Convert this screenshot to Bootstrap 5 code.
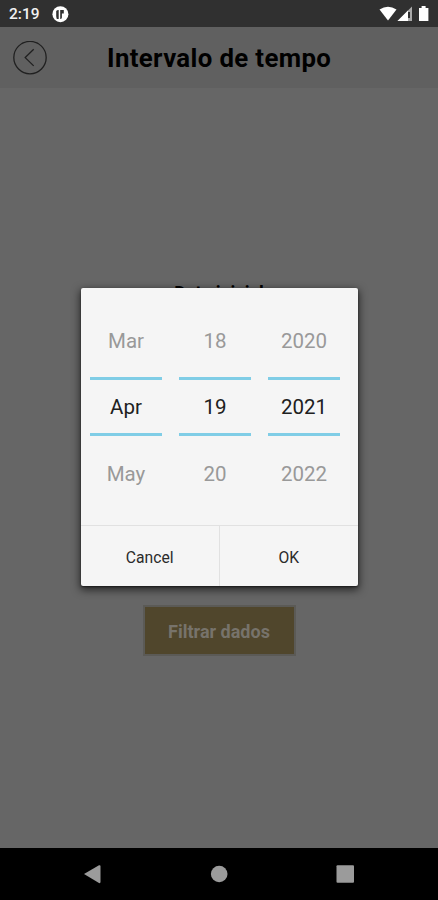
<!DOCTYPE html>
<html lang="pt">
<head>
<meta charset="utf-8">
<meta name="viewport" content="width=device-width, initial-scale=1">
<title>Intervalo de tempo</title>
<link href="https://cdn.jsdelivr.net/npm/bootstrap@5.3.0/dist/css/bootstrap.min.css" rel="stylesheet">
<style>
body{font-family:Roboto,sans-serif;height:900px;background:#666;color:#000;overflow:hidden}
.status{height:27px;background:#303030;color:#f2f2f2;font-size:15.5px;font-weight:500;line-height:27px;padding:1px 7px 0 9px;gap:12px}
.topbar{height:61px;background:#606060;padding-left:13px}
.topbar h1{font-size:25.8px;font-weight:700;letter-spacing:.36px;margin:1px 0 0 60px;white-space:nowrap}
.start-label{font-size:18px;font-weight:700;line-height:20px;padding-top:195px}
.filter-btn{width:153px;height:51px;margin-top:302px;border:2px solid #5b5a56;border-radius:0;background:#50462c;color:#77736b;font-size:18px;font-weight:700;padding:2px 0 0}
.navkeys{height:52px;background:#000}
.picker{left:81px;top:288px;width:277px;height:298px;padding-top:1px;border-radius:2px;background:#f5f5f5;box-shadow:0 3px 8px 1px rgba(0,0,0,.62),0 1px 2px rgba(0,0,0,.5)}
.wheels{height:236px;padding:19px 18px 0 9px;gap:17px}
.wheel{width:72px;font-size:20.5px;color:#999;text-align:center}
.wheel span{display:block;height:67px;line-height:66px}
.wheel .chosen{height:59px;line-height:55px;margin:2px 0 5px;color:#202020;border:solid #80cde6;border-width:3px 0}
.actions{height:61px;border-top:1px solid #e1e1e1}
.actions .btn{width:50%;border:0;border-radius:0;color:#2b2b2b;font-size:15.7px;padding:3px 0 0}
.actions .btn:first-child{border-right:1px solid #e1e1e1}
</style>
</head>
<body class="d-flex flex-column position-relative">
<div class="status d-flex align-items-center flex-shrink-0">
  <span>2:19</span>
  <svg width="17" height="17" viewBox="0 0 17 17"><circle cx="8.4" cy="8.2" r="8" fill="#fff"/><path d="M4.2 5Q5 3.8 6.7 3.9V13H4.8Q4.2 11 4.2 10ZM8.2 3.9H11.8V7.4H9.9V11.5Q9.8 13 8.2 13Z" fill="#303030"/></svg>
  <svg class="ms-auto" width="52" height="18" viewBox="0 0 52 18"><path d="M.5 4.6Q9 -1.3 17.5 4.6L9 15.5Z" fill="#fff"/><path d="M18.5 16L33 1.5V16Z" fill="#aaa"/><path d="M18.5 16L29 5.5V16Z" fill="#fff"/><path d="M29 7h2v6h-2z" fill="#303030"/><path d="M40 3h2.6V1h4V3h2.8V16H40Z" fill="#fff"/></svg>
</div>
<header class="topbar d-flex align-items-center flex-shrink-0">
  <svg width="34" height="34" viewBox="0 0 34 34" fill="none" stroke="#202020" stroke-width="1.3"><circle cx="17" cy="16.6" r="16.2"/><path d="M20.7 8.3L12.2 16.6L20.7 24.9"/></svg>
  <h1>Intervalo de tempo</h1>
</header>
<main class="flex-grow-1 d-flex flex-column align-items-center">
  <div class="start-label">Data inicial</div>
  <button class="btn filter-btn" type="button">Filtrar dados</button>
</main>
<nav class="navkeys flex-shrink-0">
  <svg width="438" height="52" viewBox="0 0 438 52" fill="#9b9b9b"><path d="M84 26L99 17.3Q100.5 17 100.5 18V34Q100.5 35.5 99 35Z"/><circle cx="219.2" cy="26" r="8.3"/><rect x="336.5" y="17.3" width="17.5" height="17.5" rx="1"/></svg>
</nav>
<section class="picker position-absolute" role="dialog">
  <div class="wheels d-flex">
    <div class="wheel"><span>Mar</span><span class="chosen">Apr</span><span>May</span></div>
    <div class="wheel"><span>18</span><span class="chosen">19</span><span>20</span></div>
    <div class="wheel"><span>2020</span><span class="chosen">2021</span><span>2022</span></div>
  </div>
  <div class="actions d-flex"><button class="btn" type="button">Cancel</button><button class="btn" type="button">OK</button></div>
</section>
<script src="https://cdn.jsdelivr.net/npm/bootstrap@5.3.0/dist/js/bootstrap.bundle.min.js"></script>
</body>
</html>
